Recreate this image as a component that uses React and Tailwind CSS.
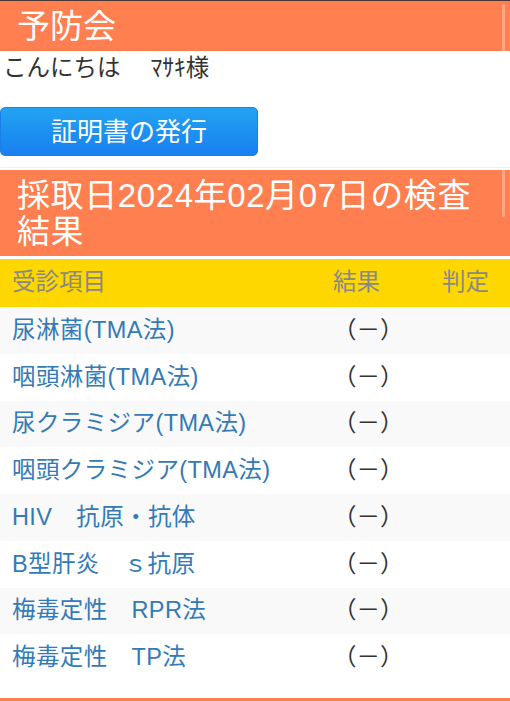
import React from "react";

const rows = [
  "尿淋菌(TMA法)",
  "咽頭淋菌(TMA法)",
  "尿クラミジア(TMA法)",
  "咽頭クラミジア(TMA法)",
  "HIV　抗原・抗体",
  "B型肝炎　ｓ抗原",
  "梅毒定性　RPR法",
  "梅毒定性　TP法",
];

const font = { fontFamily: '"Liberation Sans", "Noto Sans CJK JP", sans-serif' };

export default function App() {
  return (
    <div className="w-[510px] min-h-[701px] bg-white overflow-hidden" style={font}>
      <div className="h-px bg-[#4a3833]" />
      {/* page title */}
      <div className="relative h-[50px] bg-[#ff7f50] flex items-center pl-[17px]">
        <h1 className="text-white text-[33px] leading-none">予防会</h1>
        <span className="absolute right-[5px] top-[3px] bottom-0 w-[3px] rounded-t-full bg-white/30" />
      </div>

      <p className="h-[34px] pl-[3px] text-[23.5px] leading-[34px] text-[#333]">
        こんにちは　 ﾏｻｷ様
      </p>

      <button className="mt-[22px] w-[258px] h-[49px] rounded-[5px] bg-gradient-to-b from-[#23a3f2] to-[#1a7ff0] border border-[#1a7fe6] text-white text-[26px] leading-none">
        証明書の発行
      </button>

      <div className="mt-[11px] h-px bg-[#f2f2f2]" />

      {/* results header */}
      <div className="relative mt-[2px] bg-[#ff7f50] pl-[17px] pr-[12px] pt-2 pb-[6px]">
        <h2 className="text-white text-[33px] leading-[36px] tracking-[0.6px]">
          採取日2024年02月07日の検査結果
        </h2>
        <span className="absolute right-[5px] top-0 h-[47px] w-[3px] rounded-b-full bg-white/30" />
      </div>

      <div className="mt-[3px]">
        <div className="grid grid-cols-[321px_109px_80px] h-[48px] items-center bg-[#ffd700] text-[#888] text-[23.5px]">
          <span className="pl-3">受診項目</span>
          <span className="pl-3">結果</span>
          <span className="pl-3">判定</span>
        </div>
        {rows.map((name, i) => (
          <div
            key={name}
            className={
              "grid grid-cols-[321px_109px_80px] h-[46.75px] items-center text-[23.5px] " +
              (i % 2 === 0 ? "bg-[#f9f9f9]" : "bg-white")
            }
          >
            <span className="pl-3 text-[#337ab7] whitespace-nowrap tracking-[0.4px]">{name}</span>
            <span className="pl-3 text-[#333]">（－）</span>
            <span />
          </div>
        ))}
      </div>

      <div className="mt-[17px] h-[20px] bg-[#ff7f50]" />
    </div>
  );
}
